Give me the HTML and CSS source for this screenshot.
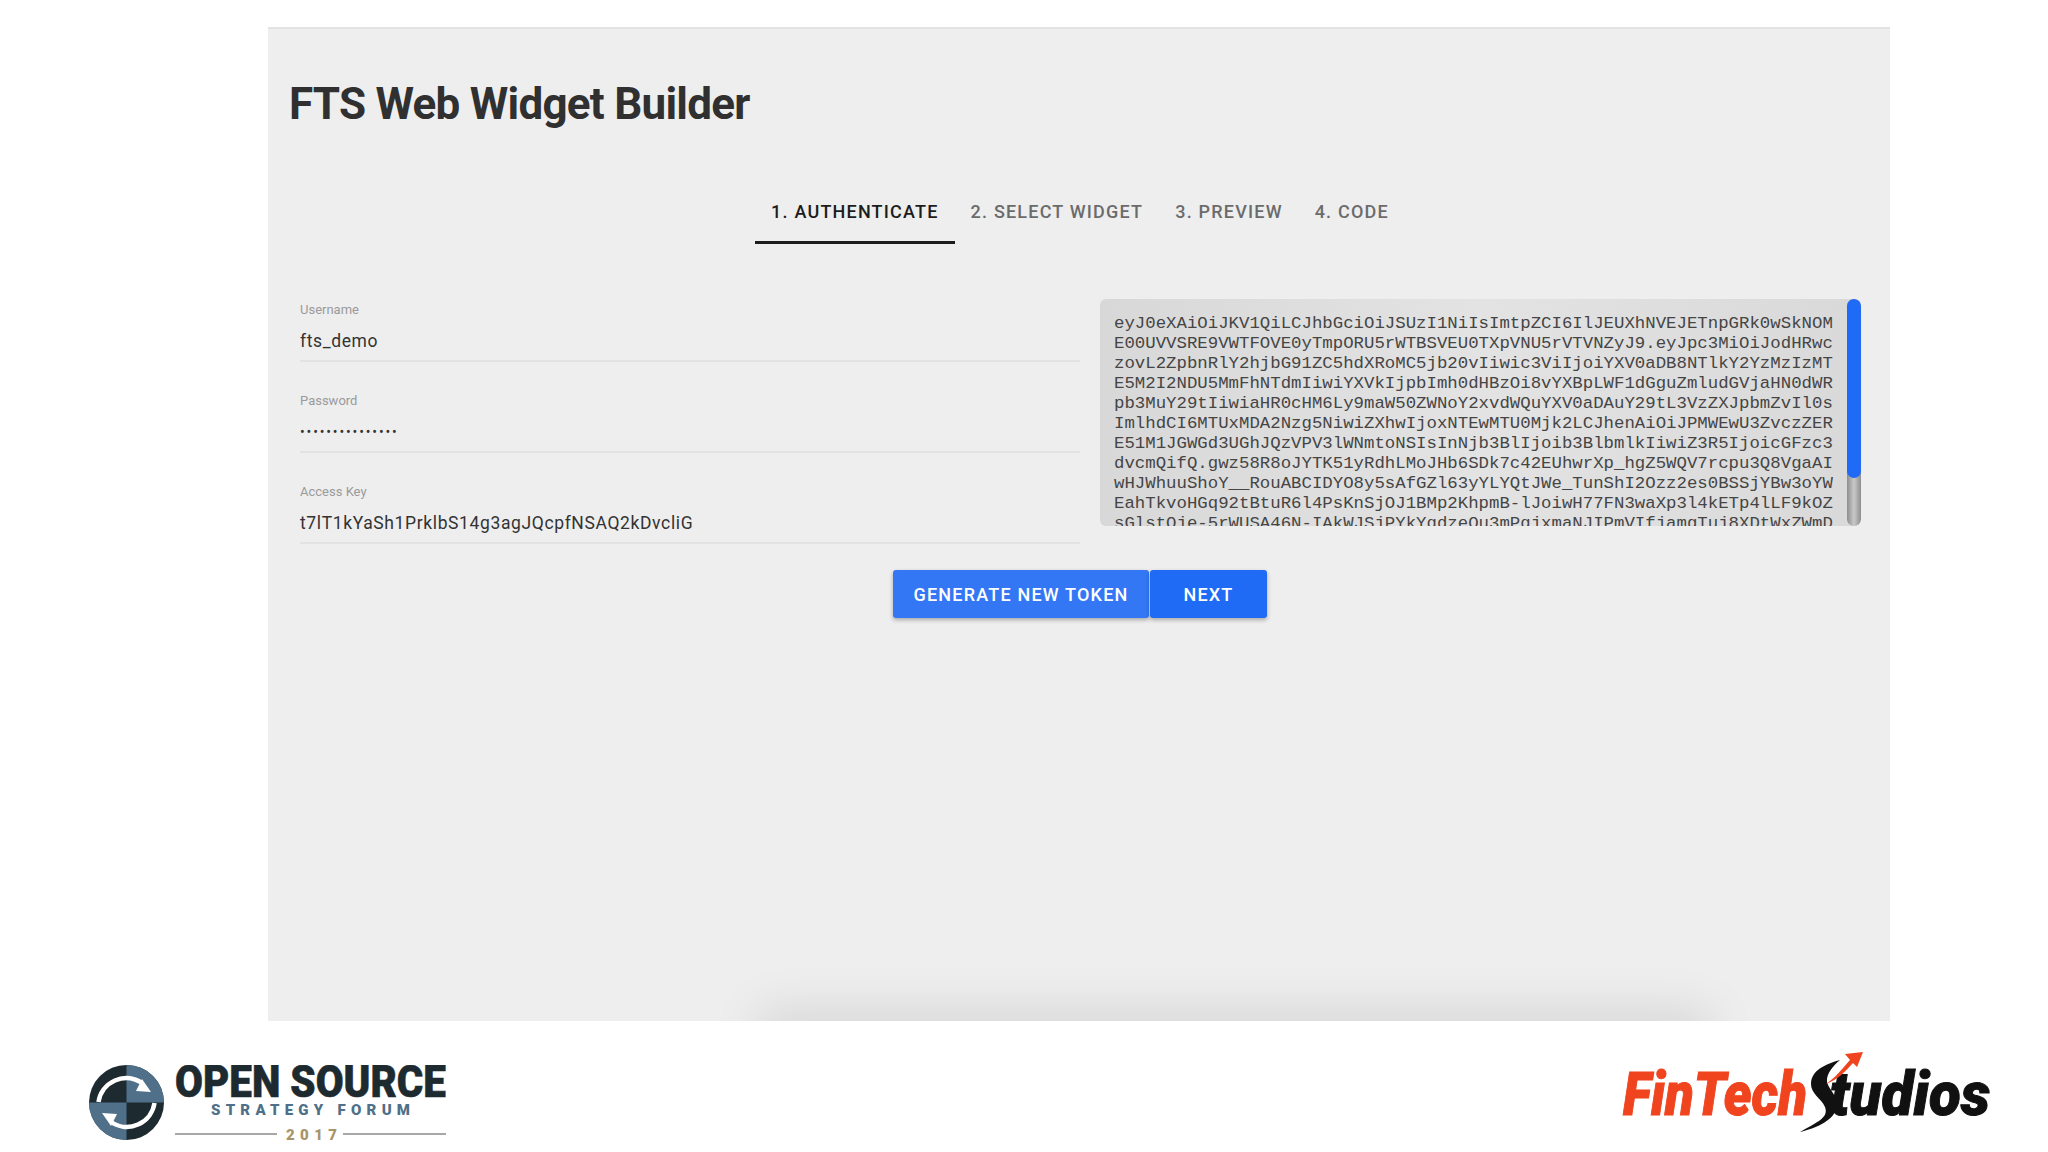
FILE: index.html
```html
<!DOCTYPE html>
<html lang="en">
<head>
  <meta charset="UTF-8" />
  <title>FTS Web Widget Builder</title>
  <link rel="stylesheet" href="styles.css">
</head>
<body>
  <main class="panel">
    <h1 class="page-title">FTS Web Widget Builder</h1>

    <nav class="tabs">
      <a class="tab active">1. AUTHENTICATE</a>
      <a class="tab">2. SELECT WIDGET</a>
      <a class="tab">3. PREVIEW</a>
      <a class="tab">4. CODE</a>
    </nav>

    <section class="auth-row">
      <div class="fields">
        <div class="field">
          <label>Username</label>
          <div class="field-value">fts_demo</div>
        </div>
        <div class="field">
          <label>Password</label>
          <div class="field-value dots">•••••••••••••••</div>
        </div>
        <div class="field">
          <label>Access Key</label>
          <div class="field-value">t7lT1kYaSh1PrklbS14g3agJQcpfNSAQ2kDvcliG</div>
        </div>
      </div>

      <div class="token-box">
        <div class="token-text">eyJ0eXAiOiJKV1QiLCJhbGciOiJSUzI1NiIsImtpZCI6IlJEUXhNVEJETnpGRk0wSkNOM
E00UVVSRE9VWTFOVE0yTmpORU5rWTBSVEU0TXpVNU5rVTVNZyJ9.eyJpc3MiOiJodHRwc
zovL2ZpbnRlY2hjbG91ZC5hdXRoMC5jb20vIiwic3ViIjoiYXV0aDB8NTlkY2YzMzIzMT
E5M2I2NDU5MmFhNTdmIiwiYXVkIjpbImh0dHBzOi8vYXBpLWF1dGguZmludGVjaHN0dWR
pb3MuY29tIiwiaHR0cHM6Ly9maW50ZWNoY2xvdWQuYXV0aDAuY29tL3VzZXJpbmZvIl0s
ImlhdCI6MTUxMDA2Nzg5NiwiZXhwIjoxNTEwMTU0Mjk2LCJhenAiOiJPMWEwU3ZvczZER
E51M1JGWGd3UGhJQzVPV3lWNmtoNSIsInNjb3BlIjoib3BlbmlkIiwiZ3R5IjoicGFzc3
dvcmQifQ.gwz58R8oJYTK51yRdhLMoJHb6SDk7c42EUhwrXp_hgZ5WQV7rcpu3Q8VgaAI
wHJWhuuShoY__RouABCIDYO8y5sAfGZl63yYLYQtJWe_TunShI2Ozz2es0BSSjYBw3oYW
EahTkvoHGq92tBtuR6l4PsKnSjOJ1BMp2KhpmB-lJoiwH77FN3waXp3l4kETp4lLF9kOZ
sGlstOje-5rWUSA46N-IAkWJSjPYkYqdzeOu3mPqjxmaNJIPmVIfjamgTuj8XDtWxZWmD</div>
        <div class="scrollbar"><div class="scroll-thumb"></div></div>
      </div>
    </section>

    <div class="actions">
      <button class="btn btn-light">GENERATE NEW TOKEN</button>
      <button class="btn btn-dark">NEXT</button>
    </div>
  </main>

  <footer class="footer">
    <div class="oss-logo">
      <svg class="oss-mark" width="75" height="75" viewBox="0 0 75 75">
        <circle cx="37.5" cy="37.5" r="37.5" fill="#1d2a30"/>
        <path d="M37.5 0A37.5 37.5 0 0 1 75 37.5H37.5Z" fill="#4f7088"/>
        <path d="M0 37.5H37.5V75A37.5 37.5 0 0 1 0 37.5Z" fill="#4f7088"/>
        <path d="M9.5 37A28 28 0 0 1 53 18" fill="none" stroke="#fff" stroke-width="4.5"/>
        <path d="M65.5 38A28 28 0 0 1 22 57" fill="none" stroke="#fff" stroke-width="4.5"/>
        <path d="M53 14L62 27L47 26Z" fill="#fff"/>
        <path d="M22 61L13 48L28 49Z" fill="#fff"/>
      </svg>
      <svg class="oss-words" width="276" height="82" viewBox="0 0 276 82">
        <text class="oss-name" x="1" y="32" textLength="271" lengthAdjust="spacingAndGlyphs">OPEN SOURCE</text>
        <text class="oss-sub" x="37" y="50" textLength="199">STRATEGY FORUM</text>
        <path d="M1 69H103M169 69H272" stroke="#8a8a8a" stroke-width="1.5"/>
        <text class="oss-year" x="112" y="75" textLength="51">2017</text>
      </svg>
    </div>

    <svg class="fintech-logo" width="370" height="84" viewBox="0 0 370 84">
      <text class="fintech-word orange" x="2" y="63" textLength="184" lengthAdjust="spacingAndGlyphs">FinTech</text>
      <text class="fintech-word" x="209" y="63" textLength="160" lengthAdjust="spacingAndGlyphs">tudios</text>
      <path d="M219 8C205 12 190 18 190 32C190 42 200 46 204 55C208 66 196 70 179 80C196 76 214 68 216 54C217 44 208 38 206 30C205 22 212 14 219 8Z" fill="#111"/>
      <path d="M205 32C214 26 222 16 229 8L224 2L242 0L236 15L232 11C224 20 216 28 205 32Z" fill="#f0441f"/>
    </svg>
  </footer>
</body>
</html>
```

FILE: styles.css
```css
* {
  margin: 0;
  padding: 0;
  box-sizing: border-box;
}

body {
  font-family: Roboto, 'Noto Sans', sans-serif;
  background: #fff;
  width: 2048px;
  height: 1152px;
  overflow: hidden;
}

.panel {
  position: relative;
  overflow: hidden;
  margin: 27px 0 0 268px;
  width: 1622px;
  height: 994px;
  background: #eeeeef;
  border-top: 2px solid #e3e3e3;
  padding-top: 52px;
}

/* shadow of something sitting just below the panel */
.panel::after {
  content: '';
  position: absolute;
  left: 500px;
  right: 190px;
  bottom: -40px;
  height: 40px;
  box-shadow: 0 0 50px 10px rgba(0, 0, 0, 0.1);
}

.page-title {
  font-size: 44px;
  font-weight: 700;
  line-height: 46px;
  color: #303030;
  margin-left: 21px;
  letter-spacing: -0.75px;
}

.tabs {
  display: flex;
  justify-content: center;
  margin-top: 72px;
  padding-left: 2px;
}

.tab {
  padding: 0 16px;
  height: 45px;
  line-height: 26px;
  font-size: 18px;
  font-weight: 500;
  letter-spacing: 1.2px;
  color: #6b6b6b;
  border-bottom: 3px solid transparent;
}

.tab.active {
  color: #1c1c1c;
  border-bottom-color: #1c1c1c;
}

.auth-row {
  display: flex;
  gap: 20px;
  margin-top: 55px;
  padding-left: 32px;
}

.fields {
  width: 780px;
  padding-top: 3px;
}

.field {
  height: 91px;
}

.field:last-child {
  height: 62px;
}

.field label {
  display: block;
  font-size: 13px;
  line-height: 16px;
  color: #9a9a9a;
}

.field-value {
  height: 44px;
  padding-top: 8px;
  line-height: 30px;
  font-size: 17.5px;
  letter-spacing: 0.62px;
  color: #333;
  border-bottom: 2px solid #e2e2e2;
}

.field-value.dots {
  font-size: 14px;
  letter-spacing: 1.85px;
}

.token-box {
  display: flex;
  width: 761px;
  height: 227px;
  border-radius: 6px;
  overflow: hidden;
  background: linear-gradient(90deg, #d8d8d8, #e3e3e3 50%, #d9d9d9);
}

.token-text {
  flex: 1;
  padding: 15px 0 0 14px;
  font-family: 'Liberation Mono', monospace;
  font-size: 17.37px;
  line-height: 20.05px;
  color: #454545;
  white-space: pre;
  overflow: hidden;
}

.scrollbar {
  width: 14px;
  border-radius: 7px;
  background: linear-gradient(90deg, #8e8e8e, #c9c9c9 50%, #8e8e8e);
}

.scroll-thumb {
  height: 179px;
  border-radius: 7px;
  background: #1f6bf5;
}

.actions {
  display: flex;
  justify-content: center;
  gap: 1px;
  margin-top: 24px;
  padding-left: 2px;
}

.btn {
  height: 48px;
  border: none;
  border-radius: 3px;
  font-family: inherit;
  font-size: 18px;
  font-weight: 500;
  letter-spacing: 1.2px;
  color: #fff;
  box-shadow: 0 2px 4px rgba(0, 0, 0, 0.3);
}

.btn-light {
  width: 256px;
  background: #3377f5;
}

.btn-dark {
  width: 117px;
  background: #1f6bf5;
}

.footer {
  display: flex;
  justify-content: space-between;
  align-items: flex-start;
  padding: 30px 57px 0 89px;
  height: 131px;
}

.oss-logo {
  display: flex;
  gap: 10px;
  margin-top: 14px;
}

.oss-name {
  font-family: Roboto, sans-serif;
  font-weight: 900;
  font-size: 44px;
  fill: #1d2a30;
  stroke: #1d2a30;
  stroke-width: 0.6px;
}

.oss-sub {
  font-family: Roboto, sans-serif;
  font-weight: 900;
  font-size: 15px;
  fill: #4f7088;
}

.oss-year {
  font-family: Roboto, sans-serif;
  font-weight: 900;
  font-size: 15px;
  fill: #a8946a;
}

.fintech-logo {
  display: block;
  margin-top: 1px;
}

.fintech-word {
  font-family: Roboto, sans-serif;
  font-size: 60px;
  font-weight: 900;
  font-style: italic;
  fill: #111;
  stroke: #111;
  stroke-width: 1px;
}

.fintech-word.orange {
  fill: #f0441f;
  stroke: #f0441f;
}
```
